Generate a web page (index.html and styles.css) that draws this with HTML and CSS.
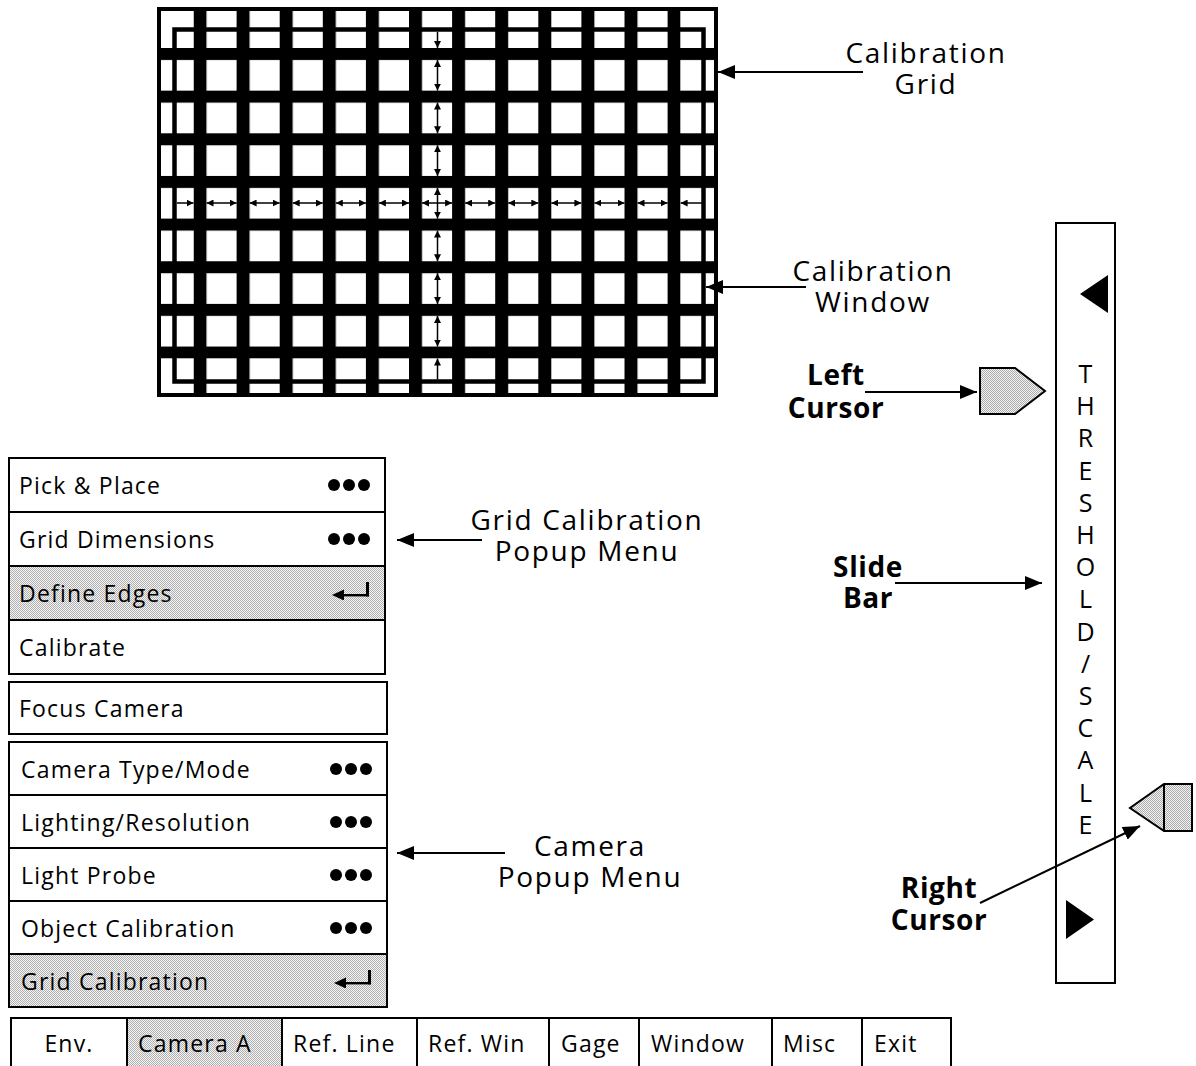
FILE: index.html
```html
<!DOCTYPE html>
<html lang="en">
<head>
    <meta charset="UTF-8">
    <title>Grid Calibration</title>
    <link rel="stylesheet" href="styles.css">
</head>
<body>

<div id="page">
    <div id="left">
        <!-- calibration grid as seen by the camera -->
        <svg id="grid" width="561" height="391" viewBox="157 7 561 391">
            <defs>
                <pattern id="vbars" x="193.5" y="0" width="43.1" height="10" patternUnits="userSpaceOnUse">
                    <rect width="13" height="10"/>
                </pattern>
                <pattern id="hbars" x="0" y="48" width="10" height="42.65" patternUnits="userSpaceOnUse">
                    <rect width="10" height="12"/>
                </pattern>
                <marker id="tip" viewBox="0 0 8 8" refX="8" refY="4" markerWidth="7" markerHeight="7"
                        orient="auto-start-reverse" markerUnits="userSpaceOnUse">
                    <path d="M0,0 L8,4 L0,8z"/>
                </marker>
            </defs>
            <rect x="157" y="7" width="561" height="391" fill="#fff"/>
            <rect x="193.5" y="9" width="487.1" height="386" fill="url(#vbars)"/>
            <rect x="159" y="48" width="557" height="310.55" fill="url(#hbars)"/>
            <rect x="174.5" y="29.5" width="529" height="352" fill="none" stroke="#000" stroke-width="4.5"/>
            <rect x="159" y="9" width="557" height="386" fill="none" stroke="#000" stroke-width="4"/>
            <g stroke="#000" stroke-width="1.5">
                <line x1="437.5" y1="32" x2="437.5" y2="48" marker-end="url(#tip)"/>
                <line x1="437.5" y1="60" x2="437.5" y2="90.6" marker-start="url(#tip)" marker-end="url(#tip)"/>
                <line x1="437.5" y1="102.6" x2="437.5" y2="133.3" marker-start="url(#tip)" marker-end="url(#tip)"/>
                <line x1="437.5" y1="145.3" x2="437.5" y2="175.9" marker-start="url(#tip)" marker-end="url(#tip)"/>
                <line x1="437.5" y1="187.9" x2="437.5" y2="218.6" marker-start="url(#tip)" marker-end="url(#tip)"/>
                <line x1="437.5" y1="230.6" x2="437.5" y2="261.2" marker-start="url(#tip)" marker-end="url(#tip)"/>
                <line x1="437.5" y1="273.2" x2="437.5" y2="303.9" marker-start="url(#tip)" marker-end="url(#tip)"/>
                <line x1="437.5" y1="315.9" x2="437.5" y2="346.5" marker-start="url(#tip)" marker-end="url(#tip)"/>
                <line x1="437.5" y1="358.5" x2="437.5" y2="379.5" marker-start="url(#tip)"/>

                <line x1="177" y1="203" x2="193.5" y2="203" marker-end="url(#tip)"/>
                <line x1="206.5" y1="203" x2="236.6" y2="203" marker-start="url(#tip)" marker-end="url(#tip)"/>
                <line x1="249.6" y1="203" x2="279.7" y2="203" marker-start="url(#tip)" marker-end="url(#tip)"/>
                <line x1="292.7" y1="203" x2="322.8" y2="203" marker-start="url(#tip)" marker-end="url(#tip)"/>
                <line x1="335.8" y1="203" x2="365.9" y2="203" marker-start="url(#tip)" marker-end="url(#tip)"/>
                <line x1="378.9" y1="203" x2="409" y2="203" marker-start="url(#tip)" marker-end="url(#tip)"/>
                <line x1="422" y1="203" x2="452.1" y2="203" marker-start="url(#tip)" marker-end="url(#tip)"/>
                <line x1="465.1" y1="203" x2="495.2" y2="203" marker-start="url(#tip)" marker-end="url(#tip)"/>
                <line x1="508.2" y1="203" x2="538.3" y2="203" marker-start="url(#tip)" marker-end="url(#tip)"/>
                <line x1="551.3" y1="203" x2="581.4" y2="203" marker-start="url(#tip)" marker-end="url(#tip)"/>
                <line x1="594.4" y1="203" x2="624.5" y2="203" marker-start="url(#tip)" marker-end="url(#tip)"/>
                <line x1="637.5" y1="203" x2="667.6" y2="203" marker-start="url(#tip)" marker-end="url(#tip)"/>
                <line x1="680.6" y1="203" x2="702" y2="203" marker-start="url(#tip)"/>
            </g>
        </svg>

        <div class="menu" id="gridMenu">
            <div class="item"><span>Pick &amp; Place</span><span class="dots"><i></i><i></i><i></i></span></div>
            <div class="item"><span>Grid Dimensions</span><span class="dots"><i></i><i></i><i></i></span></div>
            <div class="item shade"><span>Define Edges</span>
                <svg class="enter" width="38" height="18" viewBox="0 0 38 18"><polygon points="0,13 12,7.5 12,18.5"/><rect x="10" y="12" width="27" height="2.4"/><rect x="34" y="0" width="3" height="14.4"/></svg>
            </div>
            <div class="item"><span>Calibrate</span></div>
        </div>

        <div class="menu" id="focusMenu">
            <div class="item"><span>Focus Camera</span></div>
        </div>

        <div class="menu" id="cameraMenu">
            <div class="item"><span>Camera Type/Mode</span><span class="dots"><i></i><i></i><i></i></span></div>
            <div class="item"><span>Lighting/Resolution</span><span class="dots"><i></i><i></i><i></i></span></div>
            <div class="item"><span>Light Probe</span><span class="dots"><i></i><i></i><i></i></span></div>
            <div class="item"><span>Object Calibration</span><span class="dots"><i></i><i></i><i></i></span></div>
            <div class="item shade"><span>Grid Calibration</span>
                <svg class="enter" width="38" height="18" viewBox="0 0 38 18"><polygon points="0,13 12,7.5 12,18.5"/><rect x="10" y="12" width="27" height="2.4"/><rect x="34" y="0" width="3" height="14.4"/></svg>
            </div>
        </div>

        <div id="tabs">
            <div class="tab env">Env.</div>
            <div class="tab shade cam">Camera A</div>
            <div class="tab rline">Ref. Line</div>
            <div class="tab rwin">Ref. Win</div>
            <div class="tab gage">Gage</div>
            <div class="tab win">Window</div>
            <div class="tab misc">Misc</div>
            <div class="tab exit">Exit</div>
        </div>
    </div>

    <!-- threshold / scale slide bar -->
    <div id="slidebar">
        <svg class="tri up" width="28" height="38" viewBox="0 0 28 38"><polygon points="28,0 28,38 0,19"/></svg>
        <div class="letters">
            <span>T</span><span>H</span><span>R</span><span>E</span><span>S</span><span>H</span><span>O</span><span>L</span><span>D</span><span>/</span><span>S</span><span>C</span><span>A</span><span>L</span><span>E</span>
        </div>
        <svg class="tri down" width="28" height="39" viewBox="0 0 28 39"><polygon points="0,0 0,39 28,19.5"/></svg>
    </div>

    <svg id="cursorL" class="cursor" width="70" height="52" viewBox="978 366 70 52">
        <defs>
            <pattern id="dotsL" width="2" height="2" patternUnits="userSpaceOnUse">
                <rect width="2" height="2" fill="#f4f4f4"/><rect width="1" height="1" fill="#aaa"/><rect x="1" y="1" width="1" height="1" fill="#aaa"/>
            </pattern>
        </defs>
        <polygon points="980,368 1015,368 1045,391 1015,414 980,414" fill="url(#dotsL)" stroke="#000" stroke-width="2"/>
    </svg>

    <svg id="cursorR" class="cursor" width="66" height="52" viewBox="1128 782 66 52">
        <defs>
            <pattern id="dotsR" width="2" height="2" patternUnits="userSpaceOnUse">
                <rect width="2" height="2" fill="#f4f4f4"/><rect width="1" height="1" fill="#aaa"/><rect x="1" y="1" width="1" height="1" fill="#aaa"/>
            </pattern>
        </defs>
        <polygon points="1192,784 1164,784 1130,808 1164,831 1192,831" fill="url(#dotsR)" stroke="#000" stroke-width="2"/>
        <line x1="1164" y1="784" x2="1164" y2="831" stroke="#000" stroke-width="2"/>
    </svg>

    <!-- leader arrows of the figure -->
    <svg id="leaders" width="1196" height="1066">
        <defs>
            <marker id="head" viewBox="0 0 17 14" refX="17" refY="7" markerWidth="17" markerHeight="14"
                    orient="auto" markerUnits="userSpaceOnUse">
                <path d="M0,0 L17,7 L0,14z"/>
            </marker>
        </defs>
        <g stroke="#000" stroke-width="2">
            <line x1="863" y1="72" x2="718" y2="72" marker-end="url(#head)"/>
            <line x1="806" y1="287" x2="706" y2="287" marker-end="url(#head)"/>
            <line x1="865" y1="392" x2="977" y2="392" marker-end="url(#head)"/>
            <line x1="895" y1="583" x2="1042" y2="583" marker-end="url(#head)"/>
            <line x1="482" y1="540" x2="397" y2="540" marker-end="url(#head)"/>
            <line x1="505" y1="853" x2="397" y2="853" marker-end="url(#head)"/>
            <line x1="980" y1="903" x2="1140" y2="826" marker-end="url(#head)"/>
        </g>
    </svg>

    <div class="label" id="lblGrid"><span>Calibration</span><span>Grid</span></div>
    <div class="label" id="lblWindow"><span>Calibration</span><span>Window</span></div>
    <div class="label bold" id="lblLeft"><span>Left</span><span>Cursor</span></div>
    <div class="label bold" id="lblSlide"><span>Slide</span><span>Bar</span></div>
    <div class="label bold" id="lblRight"><span>Right</span><span>Cursor</span></div>
    <div class="label" id="lblGridMenu"><span>Grid Calibration</span><span>Popup Menu</span></div>
    <div class="label" id="lblCamMenu"><span>Camera</span><span>Popup Menu</span></div>
</div>

</body>
</html>
```

FILE: styles.css
```css
*{
    margin: 0;
    padding: 0;
    box-sizing: border-box;
}
body{
    background: #fff;
    color: #000;
    font-family: "Open Sans", "Liberation Sans", sans-serif;
}
#page{
    position: relative;
    width: 1196px;
    height: 1066px;
    overflow: hidden;
}
#left{
    display: flex;
    flex-direction: column;
    align-items: flex-start;
    padding: 7px 0 0 8px;
}
#grid{
    display: block;
    margin-left: 149px;
}

/* popup menus */
.menu{
    border: 2px solid #000;
    font-size: 23px;
    font-weight: 500;
    letter-spacing: 1.2px;
}
#gridMenu{
    width: 378px;
    margin-top: 59px;
}
#focusMenu{
    width: 380px;
    margin-top: 6px;
}
#cameraMenu{
    width: 380px;
    margin-top: 6px;
}
.item{
    display: flex;
    align-items: center;
    justify-content: space-between;
    height: 54px;
    padding: 0 14px 0 9px;
    border-top: 2px solid #000;
}
.item:first-child{
    height: 52px;
    border-top: 0;
}
#focusMenu .item{
    height: 50px;
}
#cameraMenu .item{
    height: 53px;
}
#cameraMenu .item:first-child{
    height: 51px;
}
#cameraMenu .item{
    padding-left: 11px;
}
.shade{
    background: repeating-conic-gradient(#b0b0b0 0 25%, #f4f4f4 0 50%) 0 0/2px 2px;
}
.dots{
    display: flex;
    gap: 3px;
}
.dots i{
    display: block;
    width: 12px;
    height: 12px;
    border-radius: 50%;
    background: #000;
}
.enter{
    display: block;
    margin-top: -4px;
}

/* bottom tab bar */
#tabs{
    display: flex;
    margin: 9px 0 0 2px;
    height: 49px;
    border-top: 2px solid #000;
    border-left: 2px solid #000;
    font-size: 23px;
    font-weight: 500;
    letter-spacing: 1.2px;
}
.tab{
    display: flex;
    align-items: center;
    padding-left: 10px;
    border-right: 2px solid #000;
}
.env{ width: 116px; justify-content: center; padding-left: 0; }
.cam{ width: 155px; }
.rline{ width: 135px; }
.rwin{ width: 132px; }
.gage{ width: 90px; padding-left: 11px; }
.win{ width: 133px; padding-left: 11px; }
.misc{ width: 90px; }
.exit{ width: 89px; padding-left: 11px; }

/* slide bar */
#slidebar{
    position: absolute;
    left: 1055px;
    top: 222px;
    width: 61px;
    height: 762px;
    border: 2px solid #000;
    display: flex;
    flex-direction: column;
    align-items: center;
}
.tri{
    display: block;
}
.tri.up{
    align-self: flex-end;
    margin: 51px 6px 0 0;
}
.letters{
    margin-top: 44px;
    font-size: 25px;
    line-height: 32.2px;
    text-align: center;
}
.letters span{
    display: block;
}
.tri.down{
    align-self: flex-start;
    margin: 60px 0 0 9px;
}
.cursor{
    position: absolute;
}
#cursorL{
    left: 978px;
    top: 366px;
}
#cursorR{
    left: 1128px;
    top: 782px;
}
#leaders{
    position: absolute;
    left: 0;
    top: 0;
    pointer-events: none;
}

/* figure labels */
.label{
    position: absolute;
    width: 260px;
    display: flex;
    flex-direction: column;
    align-items: center;
    font-size: 28px;
    line-height: 31px;
    letter-spacing: 1.7px;
}
.label span{
    display: block;
    white-space: nowrap;
}
.bold{
    font-weight: bold;
    letter-spacing: 0.6px;
}
#lblGrid{ left: 796px; top: 37px; }
#lblWindow{ left: 743px; top: 255px; }
#lblLeft{ left: 706px; top: 358px; line-height: 33px; }
#lblSlide{ left: 738px; top: 551px; }
#lblRight{ left: 809px; top: 871px; line-height: 32px; }
#lblGridMenu{ left: 457px; top: 504px; }
#lblCamMenu{ left: 460px; top: 830px; }
```
